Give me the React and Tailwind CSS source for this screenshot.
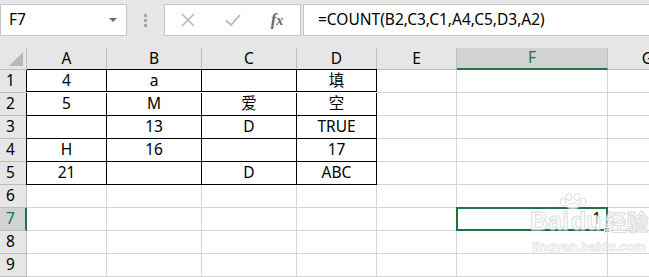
import React from "react";

const cols = ["A", "B", "C", "D", "E", "F", "G"];
const data = {
  1: ["4", "a", "", "填"],
  2: ["5", "M", "爱", "空"],
  3: ["", "13", "D", "TRUE"],
  4: ["H", "16", "", "17"],
  5: ["21", "", "D", "ABC"],
};

const font = { fontFamily: '"Noto Sans", "Noto Sans CJK SC", sans-serif' };

function Cell({ r, c }) {
  const inTable = r <= 5 && c <= 3;
  const val = inTable ? data[r][c] : "";
  let cls = "h-[23px] flex items-center justify-center text-[15.5px] text-black border-b border-r ";
  if (inTable) {
    cls += "border-black ";
    if (c === 0) cls += "border-l border-l-black -ml-px ";
    if (r === 1) cls += "border-t border-t-black -mt-px ";
  } else if (c === 3 && r === 6) {
    cls += "border-b-[#d4d4d4] border-r-[#d4d4d4] ";
  } else {
    cls += "border-[#d4d4d4] ";
  }
  if (c === 5 && r === 7) {
    return (
      <div className="h-[23px] border-b border-r border-[#d4d4d4] relative">
        <div className="absolute -left-px -top-px right-[-1px] bottom-[-1px] border-2 border-[#217346] flex items-center justify-end pr-[5px] text-[15.5px] text-black">
          1
          <div className="absolute right-[-4px] bottom-[-4px] w-[6px] h-[6px] bg-[#217346] border border-white" />
        </div>
      </div>
    );
  }
  return <div className={cls}>{val}</div>;
}

export default function App() {
  const rows = [1, 2, 3, 4, 5, 6, 7, 8, 9];
  return (
    <div className="w-[649px] h-[277px] overflow-hidden bg-white relative" style={font}>
      {/* toolbar */}
      <div className="h-[48px] bg-[#e6e6e6] flex items-start pt-[4px]">
        <div className="w-[127px] h-[32px] bg-white border border-[#c6c6c6] flex items-center justify-between pl-[8px] pr-[8px]">
          <span className="text-[15.5px] text-black">F7</span>
          <svg width="10" height="6" viewBox="0 0 10 6"><path d="M1 1h8L5 5z" fill="#6b6b6b" /></svg>
        </div>
        <div className="w-[37px] h-[32px] flex flex-col items-center justify-center gap-[2px]">
          <div className="w-[3px] h-[3px] bg-[#a6a6a6]" />
          <div className="w-[3px] h-[3px] bg-[#a6a6a6]" />
          <div className="w-[3px] h-[3px] bg-[#a6a6a6]" />
        </div>
        <div className="w-[137px] h-[32px] bg-white border border-[#c6c6c6] flex items-center">
          <div className="w-[46px] flex justify-center">
            <svg width="16" height="16" viewBox="0 0 16 16"><path d="M2 2L14 14M14 2L2 14" stroke="#b8b8b8" strokeWidth="1.6" /></svg>
          </div>
          <div className="w-[44px] flex justify-center">
            <svg width="18" height="16" viewBox="0 0 18 16"><path d="M2 8.5L7 13L16 3" stroke="#b8b8b8" strokeWidth="1.8" fill="none" /></svg>
          </div>
          <div className="w-[44px] flex justify-center">
            <span className="text-[17px] italic font-bold text-[#6b6b6b]" style={{ fontFamily: '"Liberation Serif", serif' }}>f<span className="text-[14px]">x</span></span>
          </div>
        </div>
        <div className="w-[2px]" />
        <div className="flex-1 h-[32px] bg-white border border-[#c6c6c6] border-r-0 flex items-center pl-[14px]">
          <span className="text-[15.5px] text-black">=COUNT(B2,C3,C1,A4,C5,D3,A2)</span>
        </div>
      </div>
      {/* grid */}
      <div className="grid grid-cols-[27px_80px_95px_95px_80px_80px_151px_80px]">
        {/* header row */}
        <div className="h-[22px] bg-[#e6e6e6] border-r border-b border-[#bdbdbd] relative">
          <svg className="absolute right-[3px] bottom-[3px]" width="14" height="14" viewBox="0 0 14 14"><path d="M14 0V14H0z" fill="#b8b8b8" /></svg>
        </div>
        {cols.map((c) =>
          c === "F" ? (
            <div key={c} className="h-[22px] bg-[#d2d2d2] border-r border-[#bdbdbd] border-b-2 border-b-[#217346] flex items-center justify-center text-[15.5px] text-[#217346]">{c}</div>
          ) : (
            <div key={c} className="h-[22px] bg-[#e6e6e6] border-r border-b border-[#bdbdbd] flex items-center justify-center text-[15.5px] text-black">{c}</div>
          )
        )}
        {rows.map((r) => (
          <React.Fragment key={r}>
            {r === 7 ? (
              <div className="h-[23px] bg-[#d2d2d2] border-r-2 border-r-[#217346] border-b border-b-[#bdbdbd] flex items-center pl-[6px] text-[15.5px] text-[#217346]">{r}</div>
            ) : (
              <div className="h-[23px] bg-[#e6e6e6] border-r border-b border-[#bdbdbd] flex items-center pl-[6px] text-[15.5px] text-black">{r}</div>
            )}
            {cols.map((c, ci) => (
              <Cell key={c} r={r} c={ci} />
            ))}
          </React.Fragment>
        ))}
      </div>
      {/* watermark */}
      <div className="absolute left-[530px] top-[193px] w-[120px] flex flex-col items-start pointer-events-none opacity-80 whitespace-nowrap">
        <svg className="ml-[26px]" width="34" height="16" viewBox="0 0 34 16">
          <g fill="white" stroke="#d6d6d6" strokeWidth="1">
            <ellipse cx="7" cy="9" rx="3" ry="4" />
            <ellipse cx="13" cy="4" rx="3" ry="3.5" />
            <ellipse cx="21" cy="4" rx="3" ry="3.5" />
            <ellipse cx="27" cy="9" rx="3" ry="4" />
            <ellipse cx="17" cy="13" rx="6" ry="3" />
          </g>
        </svg>
        <div className="flex items-end text-[25px] font-bold leading-none text-white [-webkit-text-stroke:1px_#d4d4d4]" style={{ fontFamily: '"Liberation Sans", "Noto Sans CJK SC", sans-serif' }}>
          <span>Bai</span><span className="ml-[2px]">du</span><span className="ml-[3px] text-[22px]">经验</span>
        </div>
        <div className="text-[13px] font-bold leading-none text-white [-webkit-text-stroke:0.6px_#d4d4d4] mt-[6px] ml-[2px]" style={{ fontFamily: '"Liberation Sans", sans-serif' }}>jingyan.baidu.com</div>
      </div>
    </div>
  );
}
